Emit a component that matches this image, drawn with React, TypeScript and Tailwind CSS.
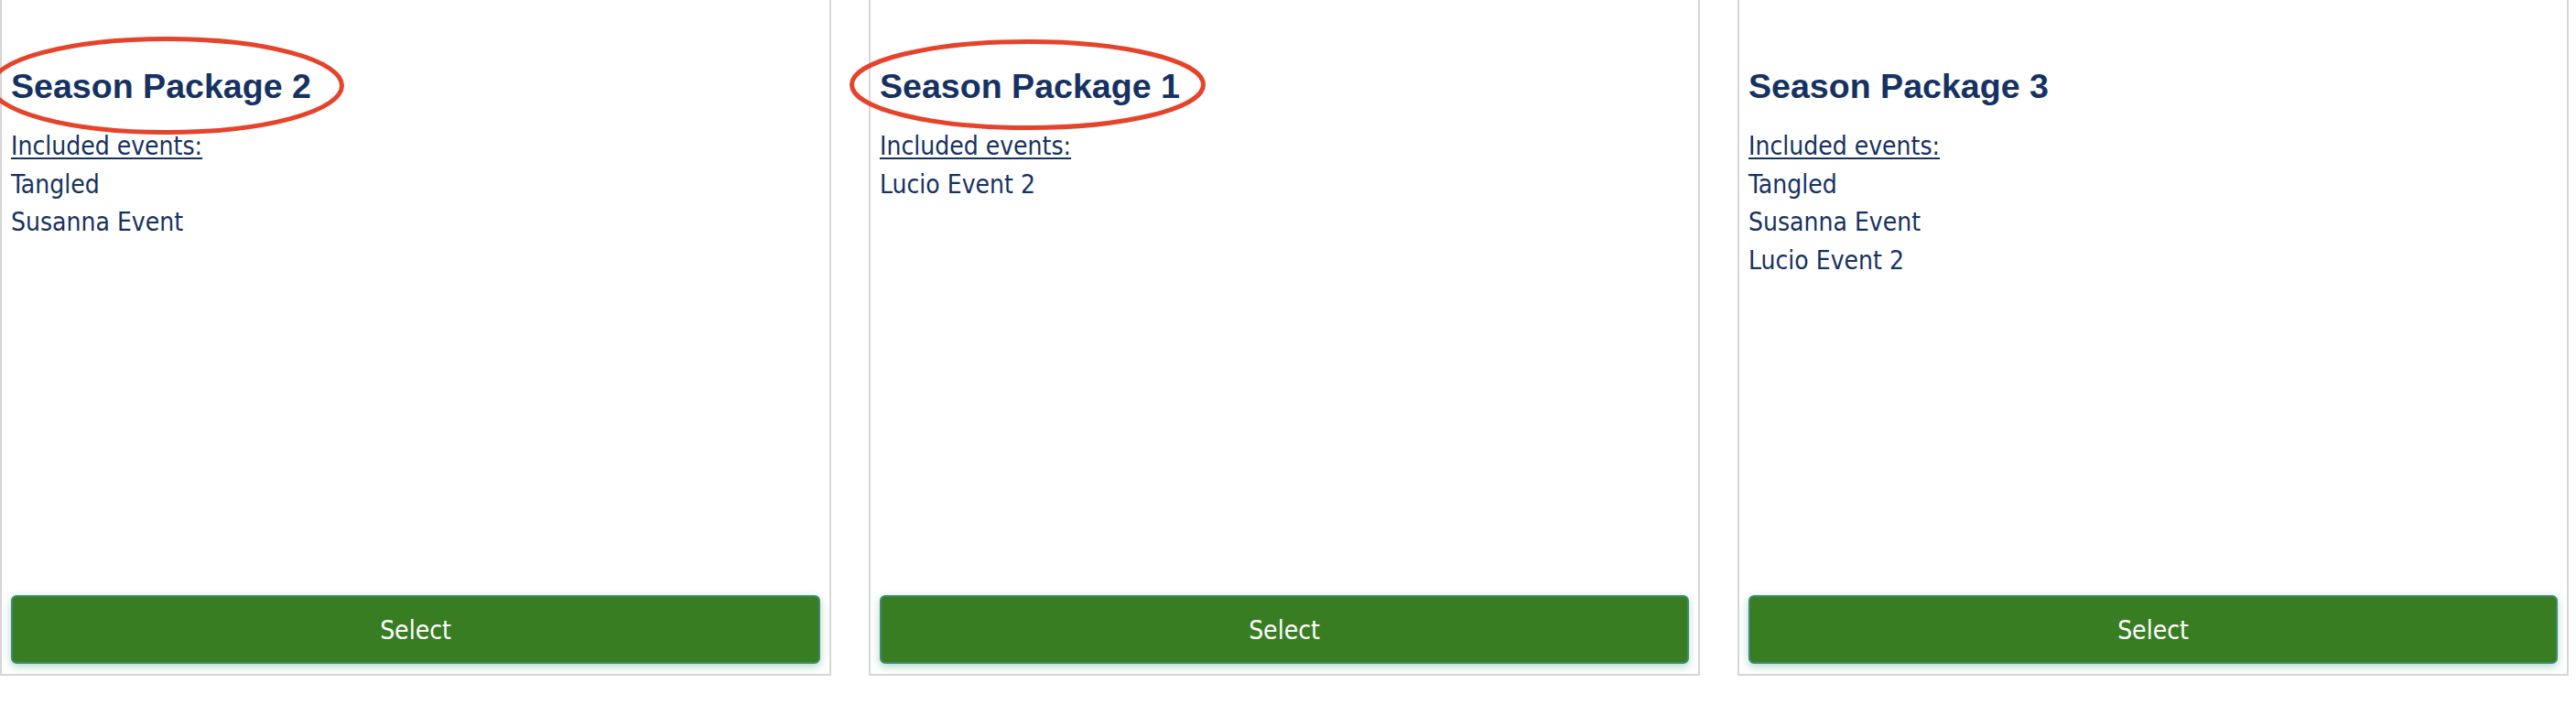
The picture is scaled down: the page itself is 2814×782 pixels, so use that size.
import React from "react";

const packages = [
  { title: "Season Package 2", events: ["Tangled", "Susanna Event"], circled: true },
  { title: "Season Package 1", events: ["Lucio Event 2"], circled: true },
  { title: "Season Package 3", events: ["Tangled", "Susanna Event", "Lucio Event 2"], circled: false },
];

const bodyFont = { fontFamily: '"DejaVu Sans Condensed", "DejaVu Sans", sans-serif', fontStretch: "condensed" as const };

export default function App() {
  return (
    <div className="relative w-[2814px] h-[782px] bg-white overflow-hidden">
      <div className="flex gap-[41px]">
        {packages.map((p) => (
          <div
            key={p.title}
            className="w-[908px] h-[738px] border-x-2 border-b-2 border-[#d6d6d6] flex flex-col px-[10px] pb-[11px] pt-[72px]"
          >
            <h2
              className="text-[37.6px] leading-[44px] font-bold text-[#163262]"
              style={{ fontFamily: '"Liberation Sans", Arial, sans-serif' }}
            >
              {p.title}
            </h2>
            <div className="mt-[23px] text-[28px] leading-[41.5px] text-[#163262]" style={bodyFont}>
              <div className="underline decoration-2 underline-offset-[3px]">Included events:</div>
              {p.events.map((e) => (
                <div key={e}>{e}</div>
              ))}
            </div>
            <button
              className="mt-auto h-[75px] w-full rounded-[6px] border-2 border-[#3f8b72] bg-[#397d23] pt-[3px] text-white text-[28px] shadow-[0_3px_10px_rgba(30,140,110,0.35)]"
              style={bodyFont}
            >
              Select
            </button>
          </div>
        ))}
      </div>
      <svg className="absolute left-0 top-0 pointer-events-none" width="2814" height="782">
        <ellipse cx="182" cy="93.5" rx="191.5" ry="51" fill="none" stroke="#e5432a" strokeWidth="5" />
        <ellipse cx="1122.5" cy="92.5" rx="192" ry="47" fill="none" stroke="#e5432a" strokeWidth="5" />
      </svg>
    </div>
  );
}
